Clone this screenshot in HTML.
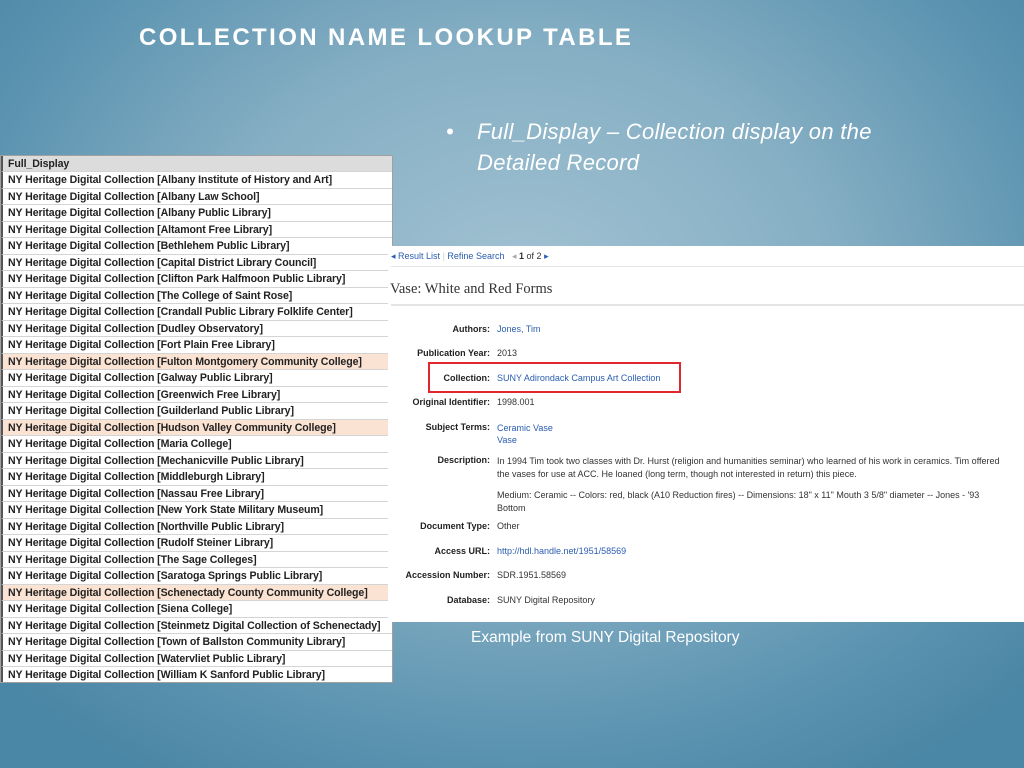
<!DOCTYPE html>
<html><head><meta charset="utf-8"><style>
*{margin:0;padding:0;box-sizing:border-box}
body{width:1024px;height:768px;overflow:hidden;position:relative;font-family:"Liberation Sans",sans-serif;
background:radial-gradient(ellipse 700px 560px at 520px 300px,#a3c3d3 0%,#86afc4 45%,#5b93b0 80%,#4a86a5 100%);}
.t{position:absolute;left:139px;top:24px;color:#fff;font-weight:bold;font-size:24px;letter-spacing:2.4px}
.bul{position:absolute;left:446px;top:116px;color:#fff;font-style:italic;font-size:22px;line-height:31px;letter-spacing:0.3px}
.bul span{position:absolute;left:0}
.bul div{padding-left:31px}
#tbl{position:absolute;left:0;top:155px;width:393px;height:528px;background:#fff;border:1px solid #a0a0a0;overflow:hidden}
#tbl div{height:16.5px;line-height:16px;font-size:10.6px;font-weight:bold;color:#222;padding-left:5px;border-bottom:1px solid #d4d4d4;white-space:nowrap;letter-spacing:-0.1px;border-left:2px solid #555}
#tbl div.h{background:#dcdcdc;height:16px}
#tbl div.o{background:#fbe3d3}
#pan{position:absolute;left:388px;top:246px;width:636px;height:376px;background:#fff;font-size:9px;color:#333}
.a{color:#2a5db0}
.l{position:absolute;right:534px;font-weight:bold;color:#222;white-space:nowrap}
.v{position:absolute;left:109px;white-space:nowrap}
.cap{position:absolute;left:471px;top:629px;color:#fff;font-size:15.5px}
</style></head><body>
<div class="t">COLLECTION NAME LOOKUP TABLE</div>
<div class="bul"><span>•</span><div>Full_Display – Collection display on the<br>Detailed Record</div></div>
<div id="tbl">
<div class="h">Full_Display</div>
<div>NY Heritage Digital Collection [Albany Institute of History and Art]</div>
<div>NY Heritage Digital Collection [Albany Law School]</div>
<div>NY Heritage Digital Collection [Albany Public Library]</div>
<div>NY Heritage Digital Collection [Altamont Free Library]</div>
<div>NY Heritage Digital Collection [Bethlehem Public Library]</div>
<div>NY Heritage Digital Collection [Capital District Library Council]</div>
<div>NY Heritage Digital Collection [Clifton Park Halfmoon Public Library]</div>
<div>NY Heritage Digital Collection [The College of Saint Rose]</div>
<div>NY Heritage Digital Collection [Crandall Public Library Folklife Center]</div>
<div>NY Heritage Digital Collection [Dudley Observatory]</div>
<div>NY Heritage Digital Collection [Fort Plain Free Library]</div>
<div class="o">NY Heritage Digital Collection [Fulton Montgomery Community College]</div>
<div>NY Heritage Digital Collection [Galway Public Library]</div>
<div>NY Heritage Digital Collection [Greenwich Free Library]</div>
<div>NY Heritage Digital Collection [Guilderland Public Library]</div>
<div class="o">NY Heritage Digital Collection [Hudson Valley Community College]</div>
<div>NY Heritage Digital Collection [Maria College]</div>
<div>NY Heritage Digital Collection [Mechanicville Public Library]</div>
<div>NY Heritage Digital Collection [Middleburgh Library]</div>
<div>NY Heritage Digital Collection [Nassau Free Library]</div>
<div>NY Heritage Digital Collection [New York State Military Museum]</div>
<div>NY Heritage Digital Collection [Northville Public Library]</div>
<div>NY Heritage Digital Collection [Rudolf Steiner Library]</div>
<div>NY Heritage Digital Collection [The Sage Colleges]</div>
<div>NY Heritage Digital Collection [Saratoga Springs Public Library]</div>
<div class="o">NY Heritage Digital Collection [Schenectady County Community College]</div>
<div>NY Heritage Digital Collection [Siena College]</div>
<div>NY Heritage Digital Collection [Steinmetz Digital Collection of Schenectady]</div>
<div>NY Heritage Digital Collection [Town of Ballston Community Library]</div>
<div>NY Heritage Digital Collection [Watervliet Public Library]</div>
<div>NY Heritage Digital Collection [William K Sanford Public Library]</div>
</div>
<div id="pan">
<div style="position:absolute;left:3px;top:5px;white-space:nowrap"><span class="a">◂ Result List</span> <span style="color:#ccc">|</span> <span class="a">Refine Search</span> &nbsp; <span style="color:#aaa">◂</span> <b>1</b> of 2 <span class="a">▸</span></div>
<div style="position:absolute;left:3px;right:0;top:20px;border-top:1px solid #e4e4e4"></div>
<div style="position:absolute;left:2px;top:35px;font-family:'Liberation Serif',serif;font-size:14.5px;color:#333">Vase: White and Red Forms</div>
<div style="position:absolute;left:3px;right:0;top:58px;border-top:2px solid #e4e4e4"></div>
<div class="l" style="top:78px">Authors:</div><div class="v a" style="top:78px">Jones, Tim</div>
<div class="l" style="top:102px">Publication Year:</div><div class="v" style="top:102px">2013</div>
<div style="position:absolute;left:40px;top:116px;width:253px;height:31px;border:2px solid #e0262e"></div>
<div class="l" style="top:127px">Collection:</div><div class="v a" style="top:127px">SUNY Adirondack Campus Art Collection</div>
<div class="l" style="top:151px">Original Identifier:</div><div class="v" style="top:151px">1998.001</div>
<div class="l" style="top:176px">Subject Terms:</div><div class="v a" style="top:176px;line-height:12px">Ceramic Vase<br>Vase</div>
<div class="l" style="top:209px">Description:</div><div class="v" style="top:209px;line-height:13px;white-space:normal;width:505px">In 1994 Tim took two classes with Dr. Hurst (religion and humanities seminar) who learned of his work in ceramics. Tim offered the vases for use at ACC. He loaned (long term, though not interested in return) this piece.</div>
<div class="v" style="top:243px;line-height:13px;white-space:normal;width:505px">Medium: Ceramic -- Colors: red, black (A10 Reduction fires) -- Dimensions: 18" x 11" Mouth 3 5/8" diameter -- Jones - '93 Bottom</div>
<div class="l" style="top:275px">Document Type:</div><div class="v" style="top:275px">Other</div>
<div class="l" style="top:300px">Access URL:</div><div class="v a" style="top:300px">http://hdl.handle.net/1951/58569</div>
<div class="l" style="top:324px">Accession Number:</div><div class="v" style="top:324px">SDR.1951.58569</div>
<div class="l" style="top:349px">Database:</div><div class="v" style="top:349px">SUNY Digital Repository</div>
</div>
<div class="cap">Example from SUNY Digital Repository</div>
</body></html>
